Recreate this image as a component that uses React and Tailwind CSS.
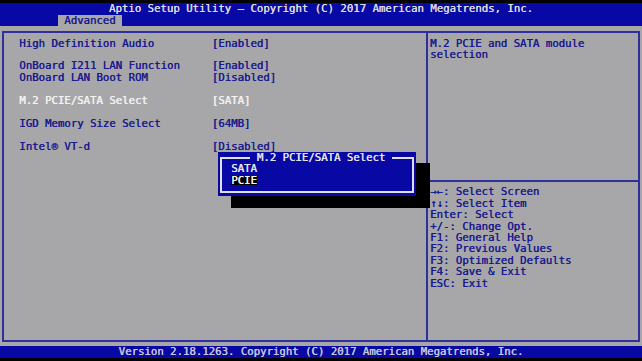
import React from "react";

const Row = ({ children, className = "" }) => (
  <div className={"h-[11.44px] leading-[11.44px] whitespace-pre " + className}>{children}</div>
);

export default function App() {
  const navy = "text-[#1a1a8e]";
  return (
    <div
      className="relative w-[642px] h-[361px] bg-black overflow-hidden text-[10.68px] flex flex-col [text-shadow:0.35px_0_0_currentColor]"
      style={{ fontFamily: '"DejaVu Sans Mono", "Liberation Mono", monospace' }}
    >
      <div className="h-[3.3px] shrink-0" />
      {/* header */}
      <div className="h-[22.88px] shrink-0 bg-[#0808a4] flex flex-col">
        <Row className="text-center text-[#dcdcdc]">
          Aptio Setup Utility – Copyright (C) 2017 American Megatrends, Inc.
        </Row>
        <div className="h-[11.44px] pl-[57.8px] flex">
          <div className="w-[64.2px] bg-[#a7a7a9] text-[#1a1a8e] leading-[11.44px] pl-[6.42px]">Advanced</div>
        </div>
      </div>
      {/* gray body */}
      <div className="h-[320.32px] shrink-0 bg-[#a7a7a9] px-[2.2px] py-[4.7px]">
        <div className="h-full border-2 border-[#30309c] flex">
          <div className="w-[421.7px] shrink-0 pt-[4.72px] pl-[15.06px]">
            {[
              ["High Definition Audio", "[Enabled]"],
              ["", ""],
              ["OnBoard I211 LAN Function", "[Enabled]"],
              ["OnBoard LAN Boot ROM", "[Disabled]"],
              ["", ""],
              ["M.2 PCIE/SATA Select", "[SATA]", true],
              ["", ""],
              ["IGD Memory Size Select", "[64MB]"],
              ["", ""],
              ["Intel® VT-d", "[Disabled]"],
            ].map(([a, b, sel], i) => (
              <div key={i} className={"flex h-[11.44px] leading-[11.44px] whitespace-pre " + (sel ? "text-[#f2f2f2]" : navy)}>
                <div className="w-[192.6px] shrink-0">{a}</div>
                <div>{b}</div>
              </div>
            ))}
          </div>
          <div className="flex-1 border-l-2 border-[#30309c] flex flex-col">
            <div className={"h-[146.7px] shrink-0 pt-[4.72px] pl-[2.2px] " + navy}>
              <Row>M.2 PCIE and SATA module</Row>
              <Row>selection</Row>
            </div>
            <div className={"flex-1 border-t-2 border-[#30309c] pt-[4.74px] pl-[2.2px] " + navy}>
              <Row>→←: Select Screen</Row>
              <Row>↑↓: Select Item</Row>
              <Row>Enter: Select</Row>
              <Row>+/-: Change Opt.</Row>
              <Row>F1: General Help</Row>
              <Row>F2: Previous Values</Row>
              <Row>F3: Optimized Defaults</Row>
              <Row>F4: Save &amp; Exit</Row>
              <Row>ESC: Exit</Row>
            </div>
          </div>
        </div>
      </div>
      {/* bottom bar */}
      <div className="h-[11.44px] shrink-0 bg-[#0808a4] text-center text-[#c8c8d8] leading-[11.44px] whitespace-pre">
        Version 2.18.1263. Copyright (C) 2017 American Megatrends, Inc.
      </div>

      {/* popup shadow */}
      <div className="absolute left-[230.7px] top-[163.4px] w-[199.4px] h-[45px] bg-black" />
      {/* popup */}
      <div className="absolute left-[218.3px] top-[152px] w-[198px] h-[43.5px] bg-[#0808a4]">
        <div className="absolute left-[2.2px] top-[4.7px] w-[193.6px] h-[36px] border-2 border-[#e0e0e0]" />
        <div className="absolute left-[32.1px] top-0 px-[6.42px] bg-[#0808a4] text-[#e4e4e4] h-[11.44px] leading-[11.44px] whitespace-pre">
          M.2 PCIE/SATA Select
        </div>
        <div className="absolute left-[12.84px] top-[11.44px] text-[#e8e8e8] h-[11.44px] leading-[11.44px]">SATA</div>
        <div className="absolute left-[12.84px] top-[22.88px] h-[11.44px] flex items-center">
          <span className="bg-black text-[#f4f4f4] leading-[9px] h-[9px] flex items-center">PCIE</span>
        </div>
      </div>
    </div>
  );
}
